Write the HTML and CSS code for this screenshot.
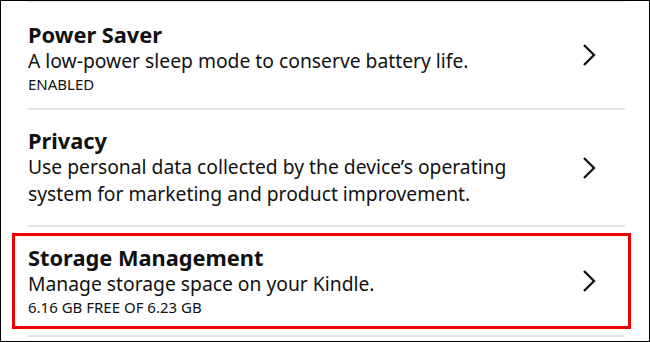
FILE: index.html
```html
<!DOCTYPE html>
<html>
<head>
  <link rel="stylesheet" href="styles.css">
</head>
<body>
  <div class="frame">
    <div class="divider top"></div>

    <div class="row first">
      <div class="text">
        <div class="title">Power Saver</div>
        <div class="desc">A low-power sleep mode to conserve battery life.</div>
        <div class="status">ENABLED</div>
      </div>
      <svg class="chevron" viewBox="0 0 14 24"><path d="M2 2 L12 12 L2 22"/></svg>
    </div>
    <div class="divider"></div>

    <div class="row tall">
      <div class="text">
        <div class="title">Privacy</div>
        <div class="desc">Use personal data collected by the device’s operating<br>system for marketing and product improvement.</div>
      </div>
      <svg class="chevron" viewBox="0 0 14 24"><path d="M2 2 L12 12 L2 22"/></svg>
    </div>
    <div class="divider"></div>

    <div class="highlight">
      <div class="row">
        <div class="text">
          <div class="title">Storage Management</div>
          <div class="desc">Manage storage space on your Kindle.</div>
          <div class="status">6.16 GB FREE OF 6.23 GB</div>
        </div>
        <svg class="chevron" viewBox="0 0 14 24"><path d="M2 2 L12 12 L2 22"/></svg>
      </div>
    </div>
    <div class="divider"></div>
  </div>
</body>
</html>
```

FILE: styles.css
```css
body, html {
  margin: 0;
  padding: 0;
  background: #fff;
  font-family: "Noto Sans", "Liberation Sans", sans-serif;
  color: #111;
}

.frame {
  width: 650px;
  height: 342px;
  box-sizing: border-box;
  border: 1px solid #000;
  overflow: hidden;
}

.divider {
  height: 2px;
  margin: 0 24px 0 27px;
  background: #e2e2e2;
}

.divider.top {
  margin-top: -1px;
}

.row {
  display: flex;
  align-items: center;
  padding: 0 0 0 27px;
  height: 106px;
}

.row.first .text {
  padding-top: 6px;
}

.row.tall {
  height: 115px;
}

.row .text {
  flex: 1;
}

.title {
  font-size: 21.8px;
  font-weight: 700;
  line-height: 26px;
}

.desc {
  font-size: 19.3px;
  line-height: 26.5px;
}

.status {
  font-size: 15px;
  line-height: 20px;
}

.chevron {
  width: 14px;
  height: 24px;
  margin-right: 53px;
  fill: none;
  stroke: #111;
  stroke-width: 2.3;
}

.highlight {
  margin: 6px 18px 6px 11px;
  border: 3px solid #e00;
}

.highlight .row {
  padding-left: 13px;
  height: 90px;
}

.highlight .chevron {
  margin-right: 32px;
}
```
